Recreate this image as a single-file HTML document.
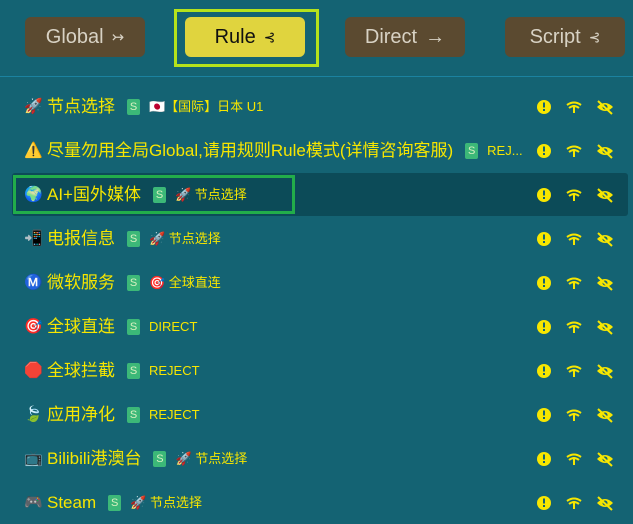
<!DOCTYPE html>
<html><head><meta charset="utf-8"><style>
body{margin:0;width:633px;height:520px;overflow:hidden;background:#146373;font-family:"Liberation Sans","Noto Sans CJK SC",sans-serif;position:relative}
.btn{position:absolute;top:17px;height:40px;width:120px;border-radius:6px;background:#5b4a30;color:#d8d2c4;font-size:20px;display:flex;align-items:center;justify-content:center;gap:8px}
.rule{background:#e0d43e;color:#111}
.out{position:absolute;left:174px;top:9px;width:139px;height:52px;border:3px solid #b5e21c}
.div{position:absolute;left:0;top:76px;width:633px;height:1px;background:#1b82a0}
.row{position:absolute;left:12px;width:616px;height:43px;display:flex;align-items:center;color:#f7e600;line-height:1}
.row.hl{background:#0c4b58;border-radius:3px}
.ic{width:18px;margin-left:12px;font-size:15px;text-align:center}
.nm{font-size:17px;margin-left:5px}
.s{display:inline-block;width:13px;height:16px;background:#3cb878;color:#d8f0c0;font-size:11px;line-height:16px;text-align:center;border-radius:2px;margin-left:12px}
.sub{font-size:13px;margin-left:9px}
.box{position:absolute;left:13px;top:175px;width:276px;height:33px;border:3px solid #22ad4a}
</style></head><body>
<div class="btn" style="left:25px">Global <span style="font-size:15px">↣</span></div>
<div class="btn rule" style="left:185px">Rule <span style="font-size:14px">⊰</span></div>
<div class="out"></div>
<div class="btn" style="left:345px">Direct <span>→</span></div>
<div class="btn" style="left:505px">Script <span style="font-size:14px">⊰</span></div>
<div class="div"></div>

<div class="row" style="top:85px"><span class="ic">🚀</span><span class="nm">节点选择</span><span class="s">S</span><span class="sub">🇯🇵【国际】日本 U1</span></div>
<div class="row" style="top:129px"><span class="ic">⚠️</span><span class="nm">尽量勿用全局Global,请用规则Rule模式(详情咨询客服)</span><span class="s">S</span><span class="sub">REJ...</span></div>
<div class="row hl" style="top:173px"><span class="ic">🌍</span><span class="nm">AI+国外媒体</span><span class="s">S</span><span class="sub">🚀 节点选择</span></div>
<div class="row" style="top:217px"><span class="ic">📲</span><span class="nm">电报信息</span><span class="s">S</span><span class="sub">🚀 节点选择</span></div>
<div class="row" style="top:261px"><span class="ic">Ⓜ️</span><span class="nm">微软服务</span><span class="s">S</span><span class="sub">🎯 全球直连</span></div>
<div class="row" style="top:305px"><span class="ic">🎯</span><span class="nm">全球直连</span><span class="s">S</span><span class="sub">DIRECT</span></div>
<div class="row" style="top:349px"><span class="ic">🛑</span><span class="nm">全球拦截</span><span class="s">S</span><span class="sub">REJECT</span></div>
<div class="row" style="top:393px"><span class="ic">🍃</span><span class="nm">应用净化</span><span class="s">S</span><span class="sub">REJECT</span></div>
<div class="row" style="top:437px"><span class="ic">📺</span><span class="nm">Bilibili港澳台</span><span class="s">S</span><span class="sub">🚀 节点选择</span></div>
<div class="row" style="top:481px"><span class="ic">🎮</span><span class="nm">Steam</span><span class="s">S</span><span class="sub">🚀 节点选择</span></div>
<div class="box"></div>

<svg width="633" height="520" style="position:absolute;left:0;top:0" fill="#f7e600" stroke="#f7e600">
<defs>
<g id="ics">
<circle cx="544" cy="0" r="7" stroke="none"/><rect x="543" y="-4.5" width="2" height="5" fill="#146373" stroke="none"/><rect x="543" y="2" width="2" height="2" fill="#146373" stroke="none"/>
<path d="M567 -2 Q574 -7 581 -2 M569 1 Q574 -3 579 1 M574 -2 L574 6" fill="none" stroke-width="2"/>
<path d="M597 0 Q605 -8 613 0 Q605 8 597 0Z" stroke="none"/><circle cx="605" cy="0" r="2.5" fill="#146373" stroke="none"/><path d="M598 -6 L612 7" fill="none" stroke-width="2"/>
</g></defs>
<use href="#ics" y="107"/><use href="#ics" y="151"/><use href="#ics" y="195"/><use href="#ics" y="239"/><use href="#ics" y="283"/><use href="#ics" y="327"/><use href="#ics" y="371"/><use href="#ics" y="415"/><use href="#ics" y="459"/><use href="#ics" y="503"/>
</svg>
</body></html>
